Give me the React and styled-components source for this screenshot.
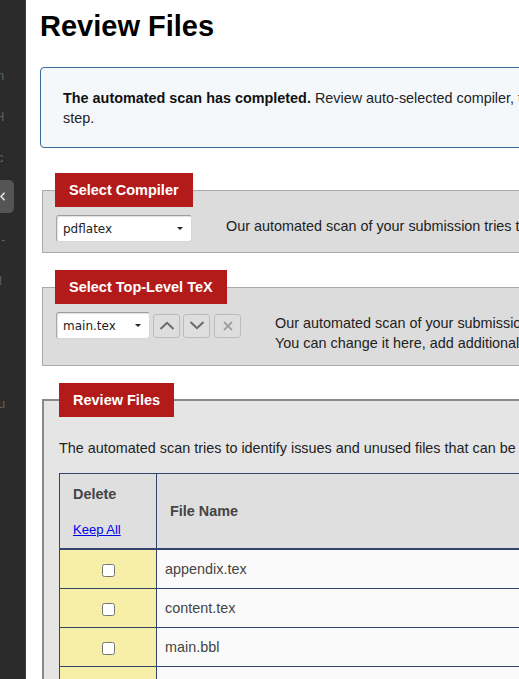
import React from "react";
import styled, { createGlobalStyle } from "styled-components";

const GlobalStyle = createGlobalStyle`
html, body {
    margin: 0;
    padding: 0;
    height: 100%;
    overflow: hidden;
    background: #fff;
}
#root {
    height: 100%;
}
body {
    font-family: "Liberation Sans", Arial, sans-serif;
    font-size: 14.4px;
    color: #222;
}
`;

const Shell = styled.div`
display: flex;
height: 100%;
`;

const Sidebar = styled.nav`
flex-shrink: 0;
width: 25px;
background: #2b2b2b;
border-right: 1px solid #3e3e3e;
padding-top: 55px;
display: flex;
flex-direction: column;
overflow: hidden;
`;

const NavItem = styled.div`
height: 41px;
display: flex;
align-items: center;
color: #5f5f5f;
font-size: 13px;
white-space: nowrap;
span {
    margin-left: ${(p) => p.shift || 0}px;
}
`;

const Collapse = styled.div`
width: 14px;
height: 33px;
margin: 2px 0 6px;
background: #555;
border-radius: 0 5px 5px 0;
display: flex;
align-items: center;
`;

const Main = styled.main`
flex-shrink: 0;
width: 1000px;
padding: 10px 0 0 14px;
`;

const Title = styled.h1`
margin: 0;
font-size: 29px;
line-height: 32px;
font-weight: 700;
color: #000;
`;

const Info = styled.div`
margin-top: 25px;
padding: 20px 22px 19px;
border: 1px solid #3b6a98;
border-radius: 4px;
background: #f5f8fb;
line-height: 20px;
white-space: nowrap;
b {
    color: #111;
}
`;

const Panel = styled.fieldset`
margin: ${(p) => p.top}px 0 0 2px;
padding: 0 ${(p) => (p.heavy ? 15 : 12)}px ${(p) => p.bottom}px;
border: ${(p) => (p.heavy ? "2px solid #898989" : "1px solid #a9a9a9")};
background: ${(p) => (p.heavy ? "#e5e5e5" : "#dcdcdc")};
min-width: 0;
`;

const Legend = styled.legend`
padding: 8px 14px;
margin: 0;
background: #b31b1b;
color: #fff;
font-weight: 700;
font-size: 14.5px;
line-height: 18px;
`;

const Row = styled.div`
display: flex;
align-items: flex-start;
margin-top: 8px;
`;

const Controls = styled.div`
display: flex;
align-items: center;
gap: 3px;
margin-left: 1px;
margin-right: 34px;
`;

const SelectBox = styled.div`
box-sizing: border-box;
width: ${(p) => p.w}px;
height: 27px;
display: flex;
align-items: center;
justify-content: space-between;
padding: 0 8px 0 6px;
background: #fff;
border: 1px solid #d6d6d6;
border-top-color: #9c9c9c;
border-left-color: #a8a8a8;
border-radius: 3px;
box-shadow: inset 1px 1px 1px rgba(0, 0, 0, 0.12);
font-family: "DejaVu Sans", sans-serif;
font-size: 12px;
color: #222;
`;

const Caret = styled.i`
width: 0;
height: 0;
border-left: 3px solid transparent;
border-right: 3px solid transparent;
border-top: 3px solid #222;
`;

const IconButton = styled.div`
box-sizing: border-box;
width: 27px;
height: 24px;
display: flex;
align-items: center;
justify-content: center;
margin-left: ${(p) => (p.apart ? 1 : 0)}px;
border: 1px solid #bcbcbc;
border-radius: 3px;
background: #dedede;
`;

const Desc = styled.p`
margin: 1px 0 0;
line-height: 20px;
white-space: nowrap;
color: #222;
`;

const Intro = styled.p`
margin: 21px 0 15px;
line-height: 20px;
white-space: nowrap;
color: #222;
`;

const Table = styled.table`
width: 820px;
border-collapse: collapse;
border: 1px solid #33446d;
`;

const HeadCell = styled.th`
text-align: left;
vertical-align: ${(p) => (p.top ? "top" : "middle")};
padding: ${(p) => (p.top ? "11px 13px 9px" : "0 13px")};
width: ${(p) => (p.w ? `${p.w}px` : "auto")};
background: #dfdfdf;
border: 1px solid #33446d;
border-bottom-width: 2px;
color: #444;
font-size: 14.4px;
line-height: 18px;
`;

const KeepAll = styled.a`
display: inline-block;
margin-top: 18px;
font-weight: 400;
font-size: 13px;
color: #0000ee;
text-decoration: underline;
`;

const Cell = styled.td`
height: 38px;
padding: 0 ${(p) => (p.center ? 0 : 8)}px;
text-align: ${(p) => (p.center ? "center" : "left")};
background: ${(p) => (p.center ? "#f7eea8" : "#fafafa")};
border: 1px solid #33446d;
color: #444;
font-size: 14.4px;
`;

const Check = styled.input`
width: 13px;
height: 13px;
margin: 0;
vertical-align: middle;
`;

const Chevron = ({ dir }) => (
    <svg width="16" height="9" viewBox="0 0 16 9">
        <path
            d={dir === "up" ? "M1.5 8 L8 1.8 L14.5 8" : "M1.5 1 L8 7.2 L14.5 1"}
            fill="none"
            stroke="#6a6a6a"
            strokeWidth="2"
        />
    </svg>
);

const files = ["appendix.tex", "content.tex", "main.bbl", "main.log", "figures.tex"];

const navBits = [
    { t: "n", s: -3 },
    { t: "H", s: -5 },
    { t: "c", s: -3 },
    null,
    { t: "-", s: 1 },
    { t: "l", s: -1 },
    { t: "", s: 0 },
    { t: "", s: 0 },
    { t: "u", s: -2 },
];

const App = () => {
    return (
        <React.Fragment>
            <GlobalStyle />
            <Shell>
                <Sidebar>
                    {navBits.map((b, i) =>
                        b ? (
                            <NavItem key={i} shift={b.s}>
                                <span>{b.t}</span>
                            </NavItem>
                        ) : (
                            <Collapse key={i}>
                                <svg width="6" height="9" viewBox="0 0 6 9">
                                    <path d="M4.5 0.8 L1 4.5 L4.5 8.2" fill="none" stroke="#e6e6e6" strokeWidth="1.6" />
                                </svg>
                            </Collapse>
                        )
                    )}
                </Sidebar>

                <Main>
                    <Title>Review Files</Title>

                    <Info>
                        <b>The automated scan has completed.</b> Review auto-selected compiler, top-level TeX file and files to the next
                        <br />
                        step.
                    </Info>

                    <Panel top={25} bottom={10}>
                        <Legend>Select Compiler</Legend>
                        <Row>
                            <Controls>
                                <SelectBox w={136}>
                                    pdflatex
                                    <Caret />
                                </SelectBox>
                            </Controls>
                            <Desc>Our automated scan of your submission tries to determine the compiler. You can change it here if needed.</Desc>
                        </Row>
                    </Panel>

                    <Panel top={17} bottom={12}>
                        <Legend>Select Top-Level TeX</Legend>
                        <Row>
                            <Controls>
                                <SelectBox w={94}>
                                    main.tex
                                    <Caret />
                                </SelectBox>
                                <IconButton>
                                    <Chevron dir="up" />
                                </IconButton>
                                <IconButton>
                                    <Chevron dir="down" />
                                </IconButton>
                                <IconButton apart>
                                    <svg width="10" height="10" viewBox="0 0 10 10">
                                        <path d="M1 1 L9 9 M9 1 L1 9" stroke="#a0a0a0" strokeWidth="1.8" />
                                    </svg>
                                </IconButton>
                            </Controls>
                            <Desc>
                                Our automated scan of your submission tries to identify the top-level TeX file.
                                <br />
                                You can change it here, add additional top-level files or change their order.
                            </Desc>
                        </Row>
                    </Panel>

                    <Panel top={17} bottom={20} heavy>
                        <Legend>Review Files</Legend>
                        <Intro>The automated scan tries to identify issues and unused files that can be removed from your submission.</Intro>
                        <Table>
                            <thead>
                                <tr>
                                    <HeadCell top w={70}>
                                        Delete
                                        <br />
                                        <KeepAll href="#">Keep All</KeepAll>
                                    </HeadCell>
                                    <HeadCell>File Name</HeadCell>
                                </tr>
                            </thead>
                            <tbody>
                                {files.map((f) => (
                                    <tr key={f}>
                                        <Cell center>
                                            <Check type="checkbox" />
                                        </Cell>
                                        <Cell>{f}</Cell>
                                    </tr>
                                ))}
                            </tbody>
                        </Table>
                    </Panel>
                </Main>
            </Shell>
        </React.Fragment>
    );
};

export default App;
